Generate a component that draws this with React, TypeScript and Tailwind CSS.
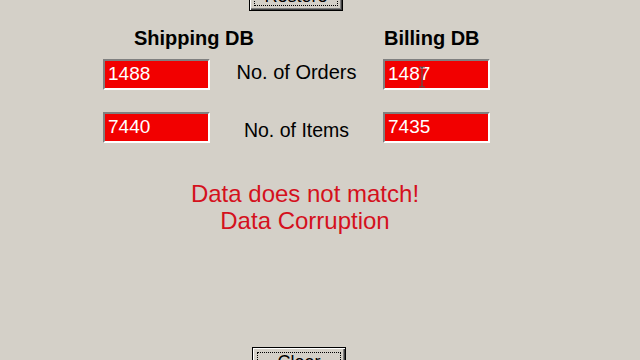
import React from 'react';

const font = { fontFamily: '"Liberation Sans", Arial, sans-serif' };

const WinButton = ({ label, className }: { label: string; className: string }) => (
  <div
    className={`flex w-[94px] h-[30px] border border-black bg-[#d4d0c8] shadow-[inset_1px_1px_0_#ffffff,inset_-1px_-1px_0_#404040,inset_-2px_-2px_0_#808080] ${className}`}
  >
    <div className="m-[4px] flex flex-1 items-center justify-center border border-dotted border-black text-[18px] leading-[20px] text-black">
      {label}
    </div>
  </div>
);

const RedBox = ({ value, cursor }: { value: string; cursor?: boolean }) => (
  <div className="relative h-[31px] w-[107px] border-2 border-t-[#808080] border-l-[#808080] border-r-white border-b-white bg-[#f20000] pl-[3px] pt-[1px] text-[19px] leading-[24px] text-white">
    {value}
    {cursor && (
      <svg className="absolute left-[33px] top-[5px]" width="8" height="22" viewBox="0 0 8 22">
        <path d="M1 1h2l1 1 1-1h2M4 2v18M1 21h2l1-1 1 1h2" stroke="#555" strokeWidth="1.2" fill="none" />
      </svg>
    )}
  </div>
);

export default function App() {
  return (
    <div className="h-[360px] w-[640px] overflow-hidden bg-[#d4d0c8]" style={font}>
      <WinButton label="Restore" className="ml-[249px] mt-[-19px]" />

      <div className="mt-[15px] flex text-[20px] font-bold leading-[24px] text-black">
        <div className="ml-[134px] w-[250px]">Shipping DB</div>
        <div>Billing DB</div>
      </div>

      <div className="ml-[103px] mt-[9px] flex">
        <RedBox value="1488" />
        <div className="w-[173px] pt-[1px] text-center text-[20px] leading-[24px] text-black">No. of Orders</div>
        <RedBox value="1487" cursor />
      </div>

      <div className="ml-[103px] mt-[22px] flex">
        <RedBox value="7440" />
        <div className="w-[173px] pt-[6px] text-center text-[19.5px] leading-[24px] text-black">No. of Items</div>
        <RedBox value="7435" />
      </div>

      <div className="mt-[37px] pr-[30px] text-center text-[24px] leading-[27px] text-[#d4111d]">
        <div>Data does not match!</div>
        <div>Data Corruption</div>
      </div>

      <WinButton label="Clear" className="ml-[252px] mt-[113px]" />
    </div>
  );
}
